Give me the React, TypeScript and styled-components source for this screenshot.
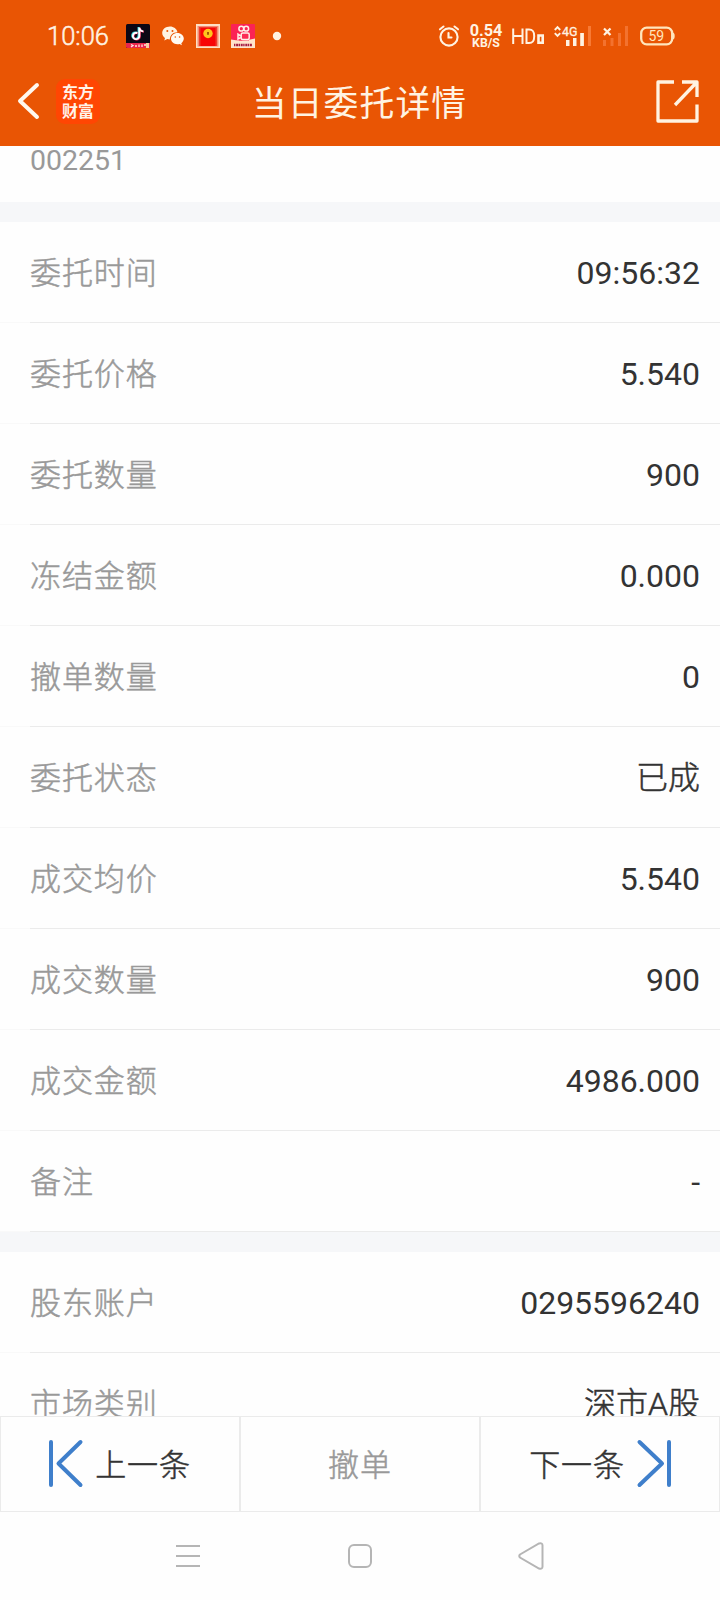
import React from 'react';
import styled, { createGlobalStyle } from 'styled-components';

const GlobalStyle = createGlobalStyle`
  * { box-sizing: border-box; }
  body {
    margin: 0;
    background: #fefefe;
    font-family: Roboto, "Noto Sans CJK SC", sans-serif;
  }
`;

const Screen = styled.div`
  width: 720px;
  height: 1600px;
  display: flex;
  flex-direction: column;
  overflow: hidden;
  background: #fefefe;
`;

const Header = styled.header`
  flex: none;
  height: 146px;
  background: #e95504;
  color: #fff3e2;
`;

const StatusBar = styled.div`
  height: 72px;
  display: flex;
  align-items: center;
  padding: 0 45px 0 47px;
`;

const Clock = styled.span`
  width: 79px;
  font-size: 25.5px;
  font-weight: 300;
  -webkit-text-stroke: 0.5px #fff3e2;
  line-height: 72px;
  white-space: nowrap;
`;

const Glyph = styled.svg<{ $gap?: number }>`
  display: block;
  flex: none;
  overflow: visible;
  margin-right: ${(p) => p.$gap ?? 0}px;
`;

const Spacer = styled.div`
  flex: 1;
`;

const Speed = styled.div`
  width: 34px;
  margin-right: 9px;
  display: flex;
  flex-direction: column;
  align-items: center;
  font-weight: 700;
  font-size: 16.3px;
  line-height: 13px;
  white-space: nowrap;
`;

const SpeedUnit = styled.div`
  font-size: 12.3px;
  line-height: 12px;
`;

const TitleBar = styled.div`
  height: 74px;
  display: grid;
  grid-template-columns: 1fr auto 1fr;
  align-items: center;
  padding: 0 21px 0 17px;
`;

const BackGroup = styled.div`
  display: flex;
  align-items: center;
  margin-top: -16px;
`;

const Brand = styled.div`
  width: 44px;
  height: 45px;
  margin-left: 15px;
  padding-top: 3px;
  border-radius: 9px;
  background: #ff4603;
  color: #fff3ea;
  font: 700 16px/19px "Noto Sans CJK SC", sans-serif;
  text-align: center;
`;

const Title = styled.h1`
  margin: -10px 0 0 3px;
  font-size: 34.8px;
  line-height: 50px;
  font-weight: 400;
  letter-spacing: 1.1px;
`;

const ShareSlot = styled.div`
  display: flex;
  justify-content: flex-end;
  margin-top: -16px;
`;

const Content = styled.main`
  flex: none;
  height: 1270px;
  overflow: hidden;
`;

const StockCode = styled.div`
  height: 56px;
  padding-left: 30px;
  font-size: 28.5px;
  line-height: 29px;
  color: #999;
`;

const Divider = styled.div`
  height: 20px;
  background: #f6f7f9;
`;

const Row = styled.div`
  height: 101px;
  display: flex;
  justify-content: space-between;
  padding-right: 20px;
  background: linear-gradient(to right, #f9f9f9 30px, #ebebeb 30px) bottom / 100% 1px no-repeat;
`;

const Label = styled.span`
  padding-left: 30px;
  font-size: 31px;
  font-weight: 300;
  -webkit-text-stroke: 0.5px currentColor;
  letter-spacing: 0.9px;
  line-height: 104px;
  color: #999;
`;

const Value = styled.span<{ $hanzi: boolean }>`
  font-size: 32px;
  font-weight: ${(p) => (p.$hanzi ? 300 : 400)};
  -webkit-text-stroke: ${(p) => (p.$hanzi ? 0.5 : 0)}px currentColor;
  line-height: ${(p) => (p.$hanzi ? 103 : 102)}px;
  color: #333;
`;

const Actions = styled.div`
  flex: none;
  height: 96px;
  display: grid;
  grid-template-columns: repeat(3, 240px);
`;

const Action = styled.button<{ $muted?: boolean }>`
  display: flex;
  align-items: center;
  justify-content: center;
  gap: 13px;
  height: 96px;
  padding: 0;
  border: 1px solid #ebebeb;
  background: #fefefe;
  color: ${(p) => (p.$muted ? '#999' : '#333')};
  font: 300 31px/48px Roboto, "Noto Sans CJK SC", sans-serif;
  -webkit-text-stroke: 0.5px currentColor;
  letter-spacing: 0.9px;
`;

const ActionText = styled.span`
  padding-top: 4px;
`;

const NavBar = styled.nav`
  flex: 1;
  display: grid;
  grid-template-columns: 1fr auto 1fr;
  align-items: center;
  padding: 0 176px 0 175px;
`;

const NavEnd = styled.div`
  display: flex;
  justify-content: flex-end;
`;

const orderRows: [string, string][] = [
  ['委托时间', '09:56:32'],
  ['委托价格', '5.540'],
  ['委托数量', '900'],
  ['冻结金额', '0.000'],
  ['撤单数量', '0'],
  ['委托状态', '已成'],
  ['成交均价', '5.540'],
  ['成交数量', '900'],
  ['成交金额', '4986.000'],
  ['备注', '-'],
];

const accountRows: [string, string][] = [
  ['股东账户', '0295596240'],
  ['市场类别', '深市A股'],
];

const Rows = ({ items }: { items: [string, string][] }) => (
  <>
    {items.map(([label, value]) => (
      <Row key={label}>
        <Label>{label}</Label>
        <Value $hanzi={/[\u4e00-\u9fff]/.test(value)}>{value}</Value>
      </Row>
    ))}
  </>
);

const cream = '#fff3e2';

const VideoAppIcon = () => (
  <Glyph $gap={12} width="24" height="24" viewBox="0 0 24 24">
    <rect width="24" height="24" rx="1.5" fill="#0c0714" />
    <g fill="none" strokeWidth="1.9">
      <path d="M11.300 9a3.200 3.200 0 1 0 2 3V3.500c.3 2.600 1.800 3.800 4 3.900" stroke="#35dce0" transform="translate(-.8 -.4)" />
      <path d="M11.300 9a3.200 3.200 0 1 0 2 3V3.500c.3 2.600 1.800 3.800 4 3.900" stroke="#ee2d5a" transform="translate(.6 .4)" />
      <path d="M11.300 9a3.200 3.200 0 1 0 2 3V3.500c.3 2.600 1.800 3.800 4 3.900" stroke="#fff" />
    </g>
    <path d="M0 19h24v5H1.500Q0 24 0 22.500z" fill="#e8264c" />
    <path d="M5 20.500l2 1-2 1.500M9 22h2M13 20.500v2.500M16 20.500v2.500M18 21h2" stroke="#ffe9e0" strokeWidth="1.300" fill="none" />
    <path d="M20 19h3v5h-3z" fill="#f4cfa4" />
  </Glyph>
);

const ChatIcon = () => (
  <Glyph $gap={12} width="22" height="20" viewBox="0 0 22 20">
    <path d="M8 .5C3.600.5.2 3.300.2 7c0 2.100 1.100 3.800 2.800 5l-.7 2.600 3-1.500c.8.2 1.600.3 2.500.3C8 9 11 6.200 15.500 6.200 14.800 2.800 11.700.5 8 .5z" fill={cream} />
    <path d="M15.400 7C11.700 7 9 9.500 9 12.600s2.700 5.700 6.400 5.700c.8 0 1.500-.1 2.200-.3l2.300 1.300-.6-2.100c1.500-1.100 2.500-2.700 2.500-4.600C21.800 9.500 19 7 15.400 7z" fill="#fffaf2" />
    <g fill="#e95504">
      <circle cx="5.300" cy="5" r="1" /><circle cx="10.500" cy="5" r="1" />
      <circle cx="13.300" cy="11" r=".8" /><circle cx="17.600" cy="11" r=".8" />
    </g>
  </Glyph>
);

const RedPacketIcon = () => (
  <Glyph $gap={11} width="24" height="24" viewBox="0 0 24 24">
    <rect width="24" height="24" fill="#ffe0c4" />
    <rect x="1.500" y="2" width="21" height="20.500" fill="#f58a70" />
    <rect x="3" y="3" width="18" height="19" fill="#ef3a2c" />
    <path d="M4.500 4h15v18h-15z" fill="#f80506" />
    <circle cx="12" cy="9.500" r="4.700" fill="#ffc51d" />
    <path d="M12 8v3M11 9h2" stroke="#8c3d00" strokeWidth="1.200" />
  </Glyph>
);

const ClipAppIcon = () => (
  <Glyph $gap={18} width="24" height="24" viewBox="0 0 24 24">
    <rect width="24" height="24" rx="1" fill="#fb2355" />
    <path d="M0 15.500q12 2.500 24-1V24H0z" fill="#ffe4cb" />
    <path d="M8 10h10v6.500H8z" fill="#fb2c55" />
    <g fill="none" stroke="#fff0e8" strokeWidth="1.500">
      <circle cx="10.300" cy="4.700" r="2.400" /><circle cx="15.200" cy="4.700" r="2.400" />
      <rect x="10.200" y="9" width="8" height="6.500" rx="1.500" />
      <path d="M9.800 12L7 10.200v4.800l2.800-1.500" />
    </g>
    <path d="M3 21h18" stroke="#a51e43" strokeWidth="2.600" strokeDasharray="1.400 .7 2 .5" />
  </Glyph>
);

const AlarmIcon = () => (
  <Glyph $gap={10} width="20" height="22" viewBox="0 0 20 22" fill="none" stroke={cream} strokeWidth="2.100" strokeLinecap="round">
    <circle cx="10" cy="12" r="8.600" />
    <path d="M9.500 8v4.500h3M1 4.300L4.500 1.500M19 4.300L15.500 1.500" />
  </Glyph>
);

const HdIcon = () => (
  <Glyph $gap={9} width="33" height="24" viewBox="0 0 33 24" fill="none" stroke={cream}>
    <path d="M1.200 4.500v15.500M10.500 4.500v15.500M1.200 12h9.300M14.500 5.500v13.500h2.500c4 0 5.200-2 5.200-6.800s-1.200-6.700-5.200-6.700z" strokeWidth="2" />
    <path d="M26.500 11.500h4.200v7.200h-4.200z" strokeWidth="2.600" />
  </Glyph>
);

const MobileSignal = () => (
  <Glyph $gap={12} width="37" height="24" viewBox="0 0 37 24" fill={cream}>
    <path d="M.8 6L3.500 3.200 6.200 6M.8 9.200L3.500 12l2.700-2.800" fill="none" stroke={cream} strokeWidth="1.900" />
    <text x="8" y="12.400" fontFamily="Roboto" fontSize="13.500" textLength="15.500" lengthAdjust="spacingAndGlyphs" stroke={cream} strokeWidth=".3">4G</text>
    <path d="M12 16h3.500v6H12zM19 14h3.500v8H19zM26.200 9h3.700v13h-3.700z" />
    <path d="M34 2h3v20h-3z" fill="#f87a35" />
  </Glyph>
);

const EmptySignal = () => (
  <Glyph $gap={12} width="25" height="24" viewBox="0 0 25 24">
    <path d="M1 4.500l6.500 6.500M7.500 4.500L1 11" stroke={cream} strokeWidth="2.200" />
    <path d="M0 16h3v6H0zM7.500 14h3v8h-3zM15 9h3v13h-3zM22 2h3v20h-3z" fill="#f3722f" />
  </Glyph>
);

const Battery = () => (
  <Glyph width="35" height="20" viewBox="0 0 35 20">
    <rect x="1.200" y="1.700" width="31" height="16.600" rx="5.500" fill="none" stroke="#ffe6bd" strokeWidth="2.300" />
    <path d="M32.500 6.500q2.200 0 2.200 3.500t-2.200 3.500z" fill="#ffe6bd" />
    <text x="16.300" y="14.700" textAnchor="middle" fontFamily="Roboto" fontSize="14" fill="#ffe6bd">59</text>
  </Glyph>
);

export default function App() {
  return (
    <>
      <GlobalStyle />
      <Screen>
        <Header>
          <StatusBar>
            <Clock>10:06</Clock>
            <VideoAppIcon />
            <ChatIcon />
            <RedPacketIcon />
            <ClipAppIcon />
            <Glyph width="8" height="8" viewBox="0 0 8 8"><circle cx="4" cy="4" r="4.200" fill={cream} /></Glyph>
            <Spacer />
            <AlarmIcon />
            <Speed><span>0.54</span><SpeedUnit>KB/S</SpeedUnit></Speed>
            <HdIcon />
            <MobileSignal />
            <EmptySignal />
            <Battery />
          </StatusBar>
          <TitleBar>
            <BackGroup>
              <Glyph width="24" height="36" viewBox="0 0 24 36" fill="none" stroke="#fff8ee" strokeWidth="4" strokeLinecap="round" strokeLinejoin="round">
                <path d="M20 2L3 18l17 16" />
              </Glyph>
              <Brand>东方<br />财富</Brand>
            </BackGroup>
            <Title>当日委托详情</Title>
            <ShareSlot>
              <Glyph width="43" height="43" viewBox="0 0 43 43" fill="none" stroke={cream} strokeWidth="3.300" strokeLinejoin="round">
                <path d="M18 2H2v39h39V24.500M26 2h15v15M41 2L19 25" />
              </Glyph>
            </ShareSlot>
          </TitleBar>
        </Header>
        <Content>
          <StockCode>002251</StockCode>
          <Divider />
          <Rows items={orderRows} />
          <Divider />
          <Rows items={accountRows} />
        </Content>
        <Actions>
          <Action>
            <Glyph width="33" height="48" viewBox="0 0 33 48" fill="none" stroke="#3f7fcb" strokeWidth="4" strokeLinecap="round" strokeLinejoin="round">
              <path d="M2 2v43M31.500 2L9.500 23.500l22 21.500" />
            </Glyph>
            <ActionText>上一条</ActionText>
          </Action>
          <Action $muted><ActionText>撤单</ActionText></Action>
          <Action>
            <ActionText>下一条</ActionText>
            <Glyph width="33" height="48" viewBox="0 0 33 48" fill="none" stroke="#3f7fcb" strokeWidth="4" strokeLinecap="round" strokeLinejoin="round">
              <path d="M31 2v43M1.500 2L24 23.500 1.500 45" />
            </Glyph>
          </Action>
        </Actions>
        <NavBar>
          <Glyph width="26" height="26" viewBox="0 0 26 26" stroke="#b5b5b5" strokeWidth="2">
            <path d="M1 3h24M1 13h24M1 23h24" />
          </Glyph>
          <Glyph width="24" height="24" viewBox="0 0 24 24" fill="none" stroke="#b5b5b5" strokeWidth="2">
            <rect x="1" y="1" width="22" height="22" rx="5" />
          </Glyph>
          <NavEnd>
            <Glyph width="26" height="28" viewBox="0 0 26 28" fill="none" stroke="#b5b5b5" strokeWidth="2">
              <path d="M2 12.500L21 1.500Q24.500.5 24.500 3.500v21q0 3-3.500 2L2 15.500Q.5 14 2 12.500z" />
            </Glyph>
          </NavEnd>
        </NavBar>
      </Screen>
    </>
  );
}
